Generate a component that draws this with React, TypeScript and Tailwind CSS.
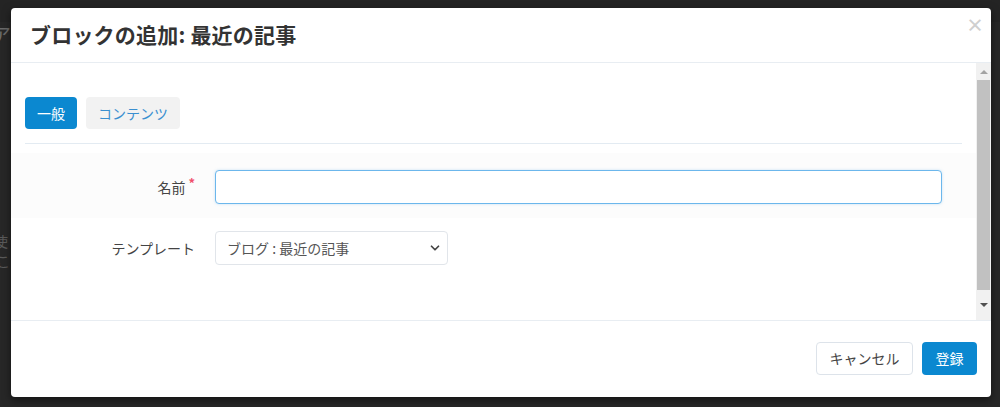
import { ChevronDown } from "lucide-react";

const jp = { fontFamily: '"Noto Sans CJK JP", "Noto Sans", sans-serif' };

function FakeScrollbar() {
  return (
    <div className="flex w-[15px] shrink-0 flex-col bg-[#f1f1f1]">
      <div className="flex h-[17px] items-center justify-center">
        <div className="h-0 w-0 border-x-[4px] border-b-[4px] border-x-transparent border-b-[#a3a3a3]" />
      </div>
      <div className="mx-[1px] h-[210px] bg-[#c1c1c1]" />
      <div className="flex flex-1 items-center justify-center">
        <div className="h-0 w-0 border-x-[4px] border-t-[4px] border-x-transparent border-t-[#505050]" />
      </div>
    </div>
  );
}

export default function App() {
  return (
    <div className="relative h-[407px] w-[1000px] overflow-hidden bg-[#272727]" style={jp}>
      {/* page behind the overlay */}
      <div className="h-[22px] bg-[#242424]" />
      <div className="-ml-[9px] text-[20px] leading-[26px] text-[#6a6a6a]">ア</div>
      <div className="-ml-[6px] mt-[183px] text-[14px] leading-[20px] text-[#5a5a5a]">使</div>
      <div className="-ml-[4px] text-[14px] leading-[20px] text-[#5a5a5a]">こ</div>

      {/* modal */}
      <div className="absolute left-[11px] top-[8px] flex h-[389px] w-[980px] flex-col rounded-[4px] bg-white shadow-[0_3px_9px_rgba(0,0,0,0.5)]">
        {/* header */}
        <div className="flex h-[55px] shrink-0 items-center justify-between border-b border-[#e8edf2] pl-[19px] pr-[7px]">
          <h1 className="text-[21px] font-bold tracking-[0.2px] text-[#333333]">ブロックの追加: 最近の記事</h1>
          <button className="-mt-[22px] text-[18px] font-bold leading-none text-[#cfcfcf]">×</button>
        </div>

        {/* body */}
        <div className="flex h-[257px] shrink-0">
          <div className="flex-1 overflow-hidden">
            <div className="px-[14px] pt-[34px]">
              <div className="flex gap-[9px] text-[14px]">
                <button className="h-[32px] w-[52px] rounded-[4px] bg-[#0b88d0] text-white">一般</button>
                <button className="h-[32px] w-[94px] rounded-[4px] bg-[#f2f2f2] text-[#3a8fd0]">コンテンツ</button>
              </div>
              <div className="mt-[14px] h-px bg-[#e3ebf2]" />
            </div>

            <div className="mt-[9px] flex items-center bg-[#fcfcfc] pb-[14px] pt-[17px] text-[14px]">
              <label className="flex w-[204px] shrink-0 items-start justify-end pr-[20px] text-[#444444]">
                名前<span className="ml-[3px] -mt-[1px] text-[13px] font-bold leading-none text-[#f0506e]">*</span>
              </label>
              <input className="h-[34px] w-[727px] rounded-[4px] border border-[#6cb7ec] bg-white px-3 shadow-[0_0_3px_rgba(102,175,233,0.35)] outline-none" />
            </div>

            <div className="flex items-center pt-[13px] text-[14px]">
              <label className="w-[204px] shrink-0 pr-[20px] text-right text-[#444444]">テンプレート</label>
              <div className="flex h-[34px] w-[233px] items-center justify-between rounded-[4px] border border-[#e1e5ea] bg-white pl-[11px] pr-[5px] text-[#555555]">
                <span>ブログ : 最近の記事</span>
                <ChevronDown size={14} strokeWidth={3} className="text-[#444444]" />
              </div>
            </div>
          </div>
          <FakeScrollbar />
        </div>

        {/* footer */}
        <div className="flex flex-1 items-start justify-end gap-[9px] border-t border-[#e8edf2] pr-[14px] pt-[21px] text-[14px]">
          <button className="h-[33px] w-[97px] rounded-[4px] border border-[#dde3ea] bg-white text-[#444444]">キャンセル</button>
          <button className="h-[33px] w-[55px] rounded-[4px] bg-[#0b88d0] text-white">登録</button>
        </div>
      </div>
    </div>
  );
}
